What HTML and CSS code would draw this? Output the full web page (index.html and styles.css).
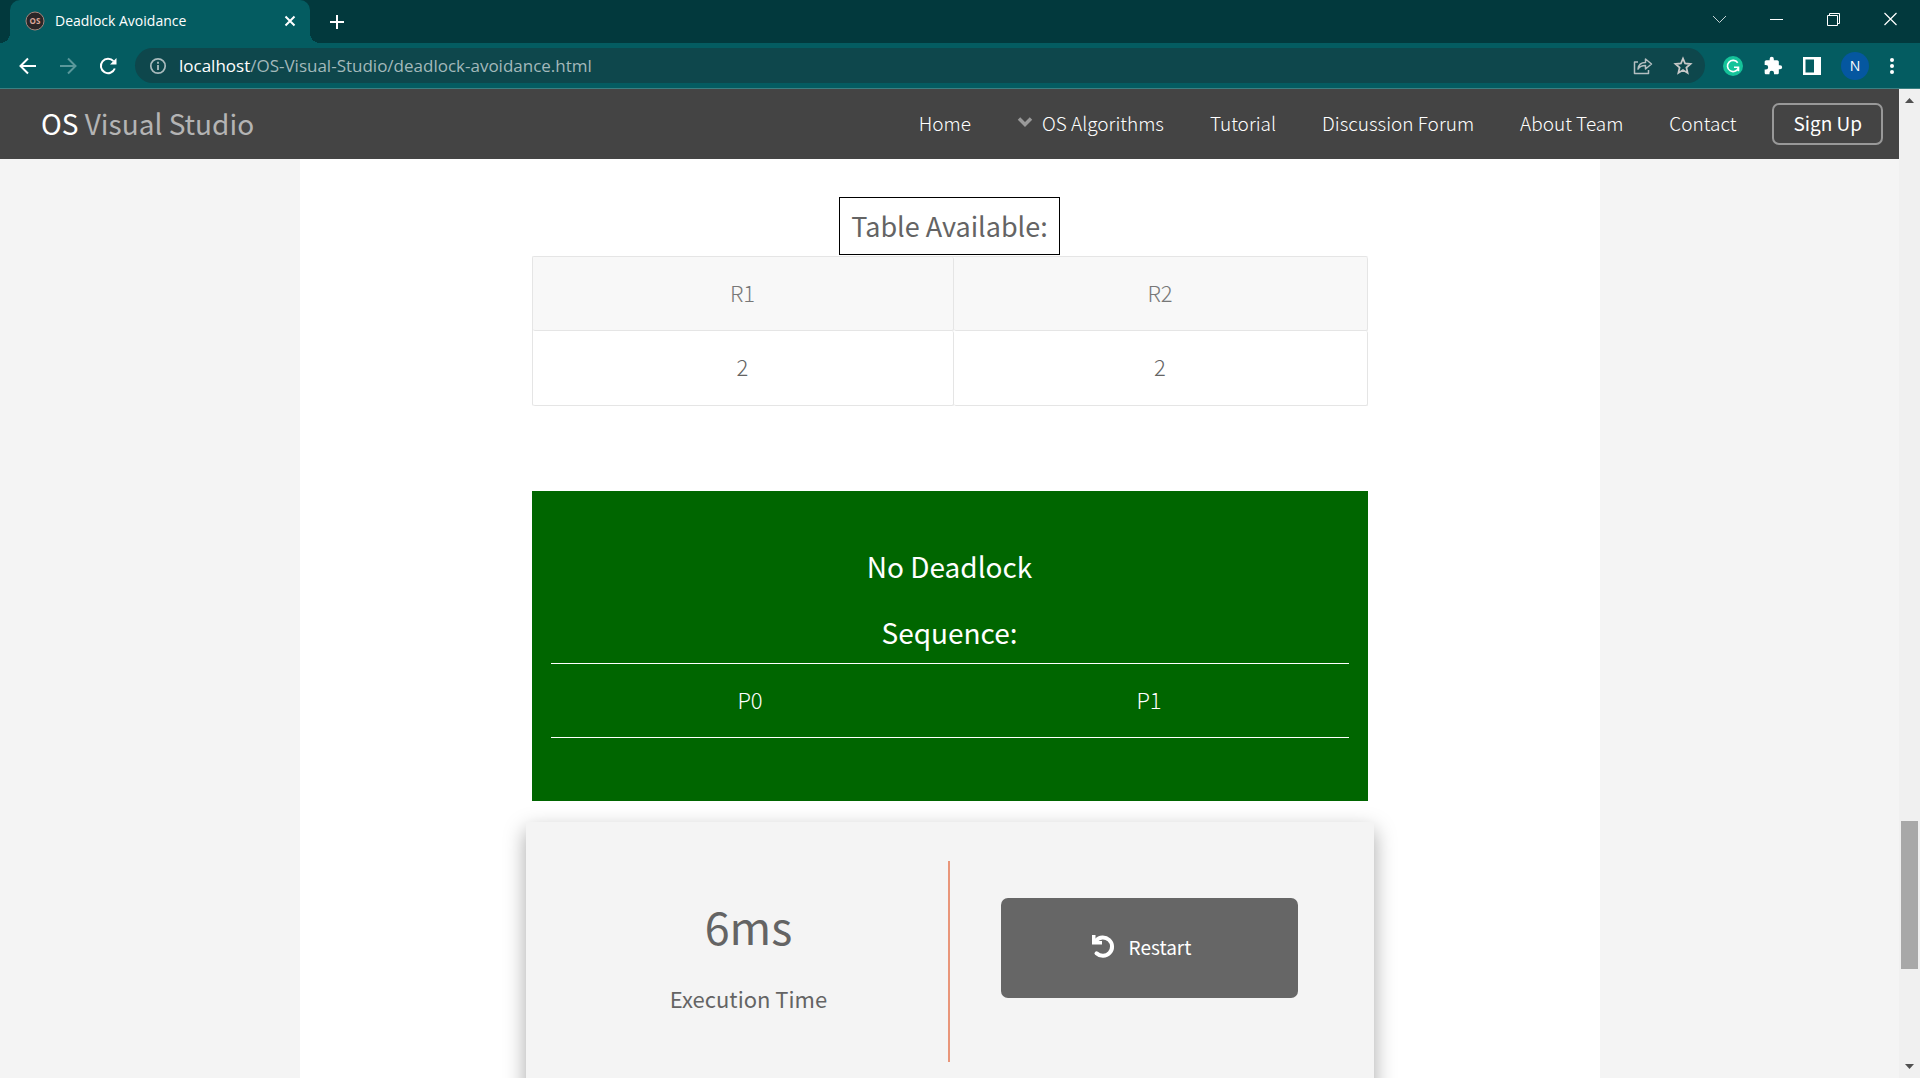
FILE: index.html
```html
<!DOCTYPE html>
<html lang="en">
<head>
<meta charset="utf-8">
<meta name="viewport" content="width=device-width, initial-scale=1">
<title>Deadlock Avoidance</title>
<link rel="stylesheet" href="styles.css">
</head>
<body>
<div class="browser">
  <div class="tab-strip">
    <div class="tab">
      <svg class="favicon" viewBox="0 0 20 20" aria-hidden="true"><circle cx="10" cy="10" r="9" fill="#2b2627" stroke="#a8847c" stroke-width="1"/><text class="favicon-text" x="10" y="13" text-anchor="middle">OS</text></svg>
      <span class="tab-title">Deadlock Avoidance</span>
      <button class="icon-button" type="button" aria-label="Close tab"><svg width="12" height="12" viewBox="0 0 12 12"><path d="M1.5 1.5l9 9M10.500 1.500l-9 9" stroke="#fff" stroke-width="2" fill="none"/></svg></button>
    </div>
    <button class="icon-button new-tab" type="button" aria-label="New tab"><svg width="16" height="16" viewBox="0 0 16 16"><path d="M8 1v14M1 8h14" stroke="#fff" stroke-width="2" fill="none"/></svg></button>
    <div class="window-controls">
      <button class="icon-button" type="button" aria-label="Search tabs"><svg width="15" height="14" viewBox="0 0 15 14"><path d="M1 4l6.500 6.500L14 4" stroke="#c5d2d4" fill="none"/></svg></button>
      <button class="icon-button" type="button" aria-label="Minimize"><svg width="15" height="14" viewBox="0 0 15 14"><path d="M1 7.500h13" stroke="#fff" fill="none"/></svg></button>
      <button class="icon-button" type="button" aria-label="Restore"><svg width="15" height="14" viewBox="0 0 15 14"><path d="M1.500 3.500h10v10h-10zM3.500 3V1.500h10v10H12" stroke="#fff" fill="none"/></svg></button>
      <button class="icon-button" type="button" aria-label="Close"><svg width="15" height="14" viewBox="0 0 15 14"><path d="M1.500 1l12 12M13.500 1l-12 12" stroke="#fff" stroke-width="1.200" fill="none"/></svg></button>
    </div>
  </div>
  <div class="toolbar">
    <div class="history">
      <button class="icon-button" type="button" aria-label="Back"><svg width="18" height="18" viewBox="0 0 18 18"><path d="M17 9H2M9 1.500L1.500 9 9 16.500" stroke="#fff" stroke-width="2" fill="none"/></svg></button>
      <button class="icon-button" type="button" aria-label="Forward"><svg width="18" height="18" viewBox="0 0 18 18"><path d="M1 9h15M9 1.500L16.500 9 9 16.500" stroke="#5a989b" stroke-width="2" fill="none"/></svg></button>
      <button class="icon-button" type="button" aria-label="Reload"><svg width="18" height="18" viewBox="0 0 18 18"><path d="M15.800 11.500A7.200 7.200 0 1 1 14.500 4.200" stroke="#fff" stroke-width="2" fill="none"/><path d="M17.500 1v6.500H11z" fill="#fff"/></svg></button>
    </div>
    <div class="address-bar">
      <svg width="18" height="18" viewBox="0 0 18 18" aria-hidden="true"><circle cx="9" cy="9" r="7.200" stroke="#a9bbbd" stroke-width="1.700" fill="none"/><path d="M9 8v5M9 4.800v2" stroke="#a9bbbd" stroke-width="1.800"/></svg>
      <span class="address"><span class="host">localhost</span>/OS-Visual-Studio/deadlock-avoidance.html</span>
      <button class="icon-button" type="button" aria-label="Share"><svg width="20" height="20" viewBox="0 0 20 20"><path d="M5 6H1.500v11.500h14V14M5 13c.5-4.500 3-6.500 7.500-6.500V3l6 5-6 5V9.500C9 9.500 6.500 10.500 5 13z" stroke="#b4bfc1" stroke-width="1.500" fill="none" stroke-linejoin="round"/></svg></button>
      <button class="icon-button" type="button" aria-label="Bookmark"><svg width="20" height="20" viewBox="0 0 20 20"><path d="M10 2.500l2.100 5 5.400.5-4.100 3.600 1.200 5.300L10 14.100l-4.600 2.800 1.200-5.300L2.500 8l5.400-.5z" stroke="#c8c8c8" stroke-width="1.800" fill="none"/></svg></button>
    </div>
    <div class="extensions">
      <button class="icon-button" type="button" aria-label="Grammarly"><svg width="20" height="20" viewBox="0 0 20 20"><circle cx="10" cy="10" r="10" fill="#15c39a"/><path d="M14.700 6.800A5.600 5.600 0 1 0 15.300 12M11 11.300h4.500v4" stroke="#fff" stroke-width="1.600" fill="none"/></svg></button>
      <button class="icon-button" type="button" aria-label="Extensions"><svg width="20" height="20" viewBox="0 0 24 24"><path fill="#fff" d="M20.500 11H19V7c0-1.100-.9-2-2-2h-4V3.500a2.500 2.500 0 0 0-5 0V5H4c-1.100 0-2 .9-2 2v3.800h1.500a2.700 2.700 0 0 1 0 5.400H2V20c0 1.100.9 2 2 2h3.800v-1.500a2.700 2.700 0 0 1 5.400 0V22H17c1.100 0 2-.9 2-2v-4h1.500a2.500 2.500 0 0 0 0-5z"/></svg></button>
      <button class="icon-button" type="button" aria-label="Side panel"><svg width="18" height="18" viewBox="0 0 18 18"><path fill="#fff" fill-rule="evenodd" d="M0 0h18v18H0zM2.500 2.500v13H11v-13z"/></svg></button>
      <button class="avatar" type="button">N</button>
      <button class="icon-button" type="button" aria-label="Menu"><svg width="6" height="18" viewBox="0 0 6 18"><g fill="#fff"><circle cx="3" cy="3" r="2"/><circle cx="3" cy="9" r="2"/><circle cx="3" cy="15" r="2"/></g></svg></button>
    </div>
  </div>
  <div class="viewport">
    <div class="page">
      <header class="site-header">
        <a class="logo" href="#"><span class="logo-strong">OS</span> Visual Studio</a>
        <nav class="site-nav">
          <a href="#">Home</a>
          <a class="has-menu" href="#"><svg width="16" height="12" viewBox="0 0 16 12" aria-hidden="true"><path d="M2 2.500l6 6 6-6" stroke="#999" stroke-width="3.500" fill="none"/></svg>OS Algorithms</a>
          <a href="#">Tutorial</a>
          <a href="#">Discussion Forum</a>
          <a href="#">About Team</a>
          <a href="#">Contact</a>
        </nav>
        <button class="sign-up" type="button">Sign Up</button>
      </header>
      <main class="content">
        <section class="available">
          <h2 class="boxed-title" id="available">Table Available:</h2>
          <table class="resources" aria-labelledby="available">
            <colgroup><col class="first-col"><col></colgroup>
            <thead><tr><th scope="col">R1</th><th scope="col">R2</th></tr></thead>
            <tbody><tr><td>2</td><td>2</td></tr></tbody>
          </table>
        </section>
        <section class="verdict">
          <h2>No Deadlock</h2>
          <h2 id="sequence">Sequence:</h2>
          <table class="sequence" aria-labelledby="sequence">
            <tbody><tr><td>P0</td><td>P1</td></tr></tbody>
          </table>
        </section>
        <section class="result">
          <div class="timing">
            <p class="time">6ms</p>
            <p class="time-label">Execution Time</p>
          </div>
          <div class="actions">
            <button class="restart" type="button"><svg width="24" height="24" viewBox="0 0 24 24" aria-hidden="true"><path d="M5 6.500A9.200 9.200 0 1 1 5.500 19.300" stroke="#fff" stroke-width="4" fill="none" stroke-linecap="round"/><path d="M1 1h3.500v6H11v3.500H1z" fill="#fff"/></svg>Restart</button>
          </div>
        </section>
      </main>
    </div>
    <div class="scrollbar" aria-hidden="true">
      <svg width="9" height="5" viewBox="0 0 9 5"><path d="M0 5L4.500 0 9 5z" fill="#505050"/></svg>
      <div class="track"><div class="thumb"></div></div>
      <svg width="9" height="5" viewBox="0 0 9 5"><path d="M0 0l4.500 5L9 0z" fill="#505050"/></svg>
    </div>
  </div>
</div>
</body>
</html>
```

FILE: styles.css
```css
* { box-sizing: border-box; }
body { margin: 0; font-family: "Noto Sans CJK SC", "Liberation Sans", sans-serif; font-weight: 300; }
button { font: inherit; color: inherit; cursor: pointer; }
a { color: inherit; text-decoration: none; }
h2, p { margin: 0; }
svg { display: block; flex: none; }

.browser { display: flex; flex-direction: column; height: 100vh; overflow: hidden; }

/* Browser frame */
.tab-strip, .toolbar { font-family: "Open Sans", "Liberation Sans", sans-serif; font-weight: 400; color: #fff; }
.icon-button { display: grid; place-items: center; padding: 0; border: 0; background: none; }
.tab-strip { display: flex; height: 43px; padding-left: 10px; background: #02393d; }
.tab { position: relative; display: flex; align-items: center; gap: 10px; width: 300px; padding: 0 14px 1px 15px; border-radius: 10px 10px 0 0; background: #045c61; }
.tab::before, .tab::after { content: ""; position: absolute; bottom: 0; width: 10px; height: 10px; }
.tab::before { right: 100%; background: radial-gradient(circle at 0 0, transparent 10px, #045c61 10px); }
.tab::after { left: 100%; background: radial-gradient(circle at 100% 0, transparent 10px, #045c61 10px); }
.favicon { width: 20px; height: 20px; }
.favicon-text { font-size: 8px; font-weight: 700; fill: #dda89c; }
.tab-title { flex: 1; padding-bottom: 1px; font-size: 14px; white-space: nowrap; }
.new-tab { width: 54px; }
.window-controls { display: flex; align-items: center; gap: 42px; height: 37px; margin-left: auto; padding-right: 22px; }
.toolbar { display: flex; align-items: center; gap: 18px; height: 46px; padding: 0 25px 0 19px; border-bottom: 1px solid #3b8082; background: #045c61; }
.history { display: flex; gap: 22px; }
.address-bar { display: flex; flex: 1; align-items: center; gap: 20px; height: 35px; padding: 0 12px 0 14px; border-radius: 18px; background: #0e474c; }
.address { flex: 1; margin-left: -8px; font-size: 17px; color: #a3b9bb; white-space: nowrap; }
.host { color: #fff; }
.extensions { display: flex; align-items: center; gap: 20px; }
.avatar { width: 28px; height: 28px; padding: 0; border: 0; border-radius: 50%; background: #0557a0; font-size: 14px; }

/* Page viewport */
.viewport { display: flex; flex: 1; min-height: 0; }
.page { flex: 1; min-width: 0; overflow: hidden; background: #f4f4f4; }
.scrollbar { display: flex; flex-direction: column; align-items: center; width: 21px; padding: 9px 0; background: #f0f0f0; }
.track { display: flex; flex: 1; flex-direction: column; align-self: stretch; padding: 0 2px; }
.track::before { content: ""; flex: 718 0 0; }
.track::after { content: ""; flex: 95 0 0; }
.thumb { flex: 148 0 0; background: #a8a8a8; }

.site-header { display: flex; align-items: center; height: 70px; padding: 0 16px 0 41px; background: #444; color: #fff; }
.logo { padding-bottom: 3px; font-size: 28px; font-weight: 400; color: #b4b4b4; white-space: nowrap; }
.logo-strong { color: #fff; }
.site-nav { display: flex; gap: 46px; margin: 0 36px 0 auto; padding-bottom: 4px; font-size: 19px; white-space: nowrap; }
.has-menu { display: flex; align-items: center; gap: 9px; }
.sign-up { height: 42px; padding: 0 19px 2px; border: 2px solid #999; border-radius: 7px; background: none; font-size: 19px; font-weight: 400; line-height: 28px; white-space: nowrap; }

.content { max-width: 1300px; margin: 0 auto; padding: 38px 226px 0; background: #fff; color: #646464; text-align: center; }
h2 { font-size: 28px; font-weight: 400; line-height: 36px; }
table { width: 100%; border-collapse: separate; border-spacing: 0; table-layout: fixed; font-size: 22px; line-height: 32px; }
th, td { padding: 19px 0 22px; font-weight: 300; }

.available { display: flex; flex-direction: column; align-items: center; gap: 1px; padding: 0 6px; }
.boxed-title { padding: 10px 11px; border: 1px solid #000; font-size: 27px; }
.first-col { width: 421px; }
.resources { border: solid #e5e5e5; border-width: 1px 0 0 1px; border-radius: 2px; }
.resources th, .resources td { border: solid #e5e5e5; border-width: 0 1px 1px 0; border-radius: 2px; }
.resources th { background: #f8f8f8; color: #777; }
.resources td { padding-bottom: 23px; }

.verdict { margin: 85px 6px 21px; padding: 57px 19px 63px; background: #060; color: #fff; }
.verdict h2 + h2 { margin: 30px 0 13px; }
.sequence { border: solid #fff; border-width: 1px 0; }

.result { display: grid; grid-template-columns: minmax(0, 1fr) minmax(0, 1fr); align-items: start; min-height: 300px; padding: 39px 0; background: #f4f4f4; box-shadow: 0 8px 20px rgba(0, 0, 0, .35); }
.timing, .actions { height: 201px; }
.timing { padding: 33px 0 0 24px; border-right: 2px solid #e9967a; font-weight: 400; }
.time { font-size: 45px; line-height: 64px; }
.time-label { margin-top: 24px; font-size: 22px; line-height: 32px; }
.actions { padding: 37px 76px 0 51px; }
.restart { display: flex; align-items: center; justify-content: center; gap: 14px; width: 100%; height: 100px; padding: 0 16px 4px 0; border: 0; border-radius: 7px; background: #666; color: #fff; font-size: 19px; font-weight: 400; }
```
